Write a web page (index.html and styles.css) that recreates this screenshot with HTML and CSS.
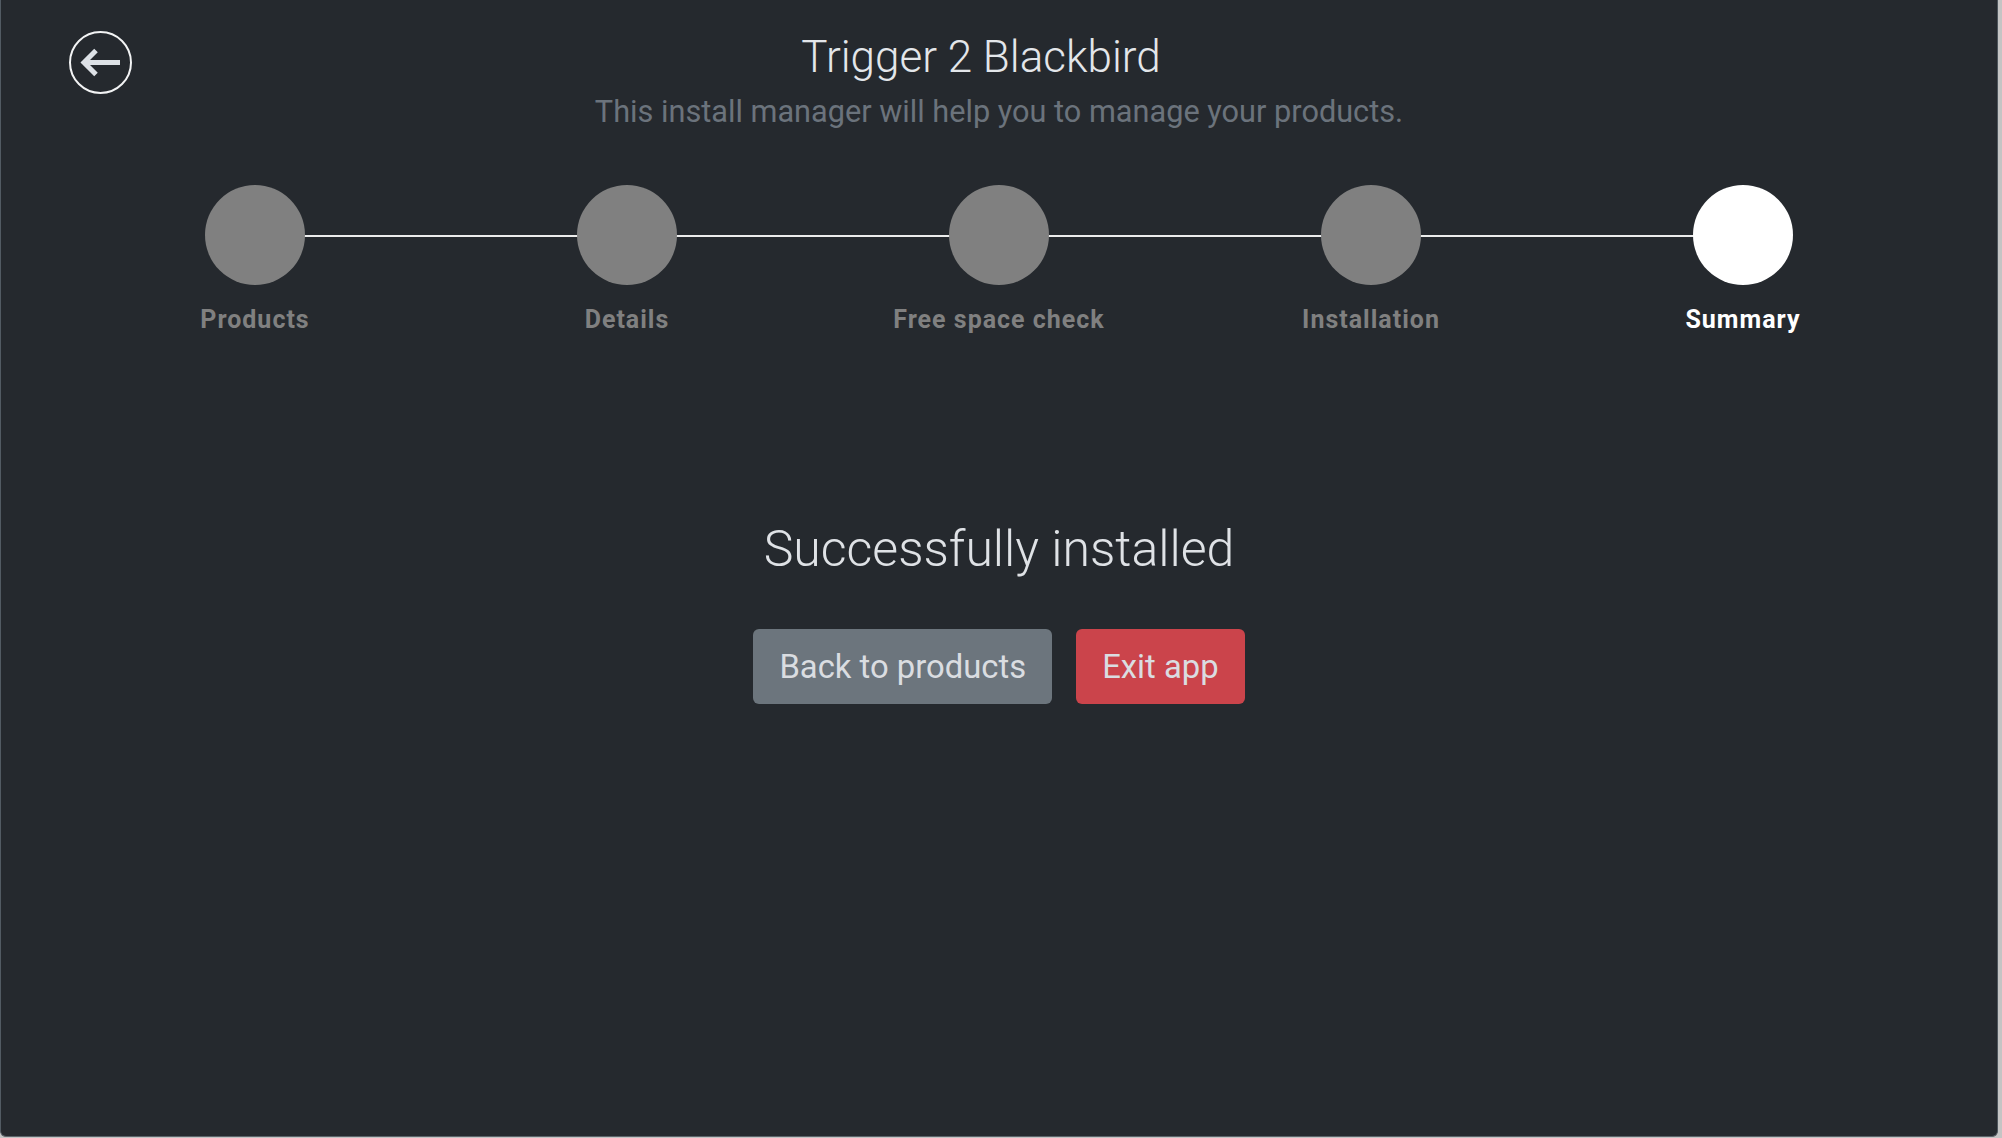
FILE: index.html
```html
<!DOCTYPE html>
<html lang="en">
<head>
<meta charset="utf-8">
<title>Trigger 2 Blackbird</title>
<link rel="stylesheet" href="styles.css">
</head>
<body>
<div class="window">
  <header class="header">
    <button class="back-btn" aria-label="Back">
      <svg viewBox="0 0 63 63" width="63" height="63">
        <circle cx="31.5" cy="31.5" r="30.5" fill="none" stroke="#f2f3f4" stroke-width="2"/>
        <path d="M27 19.5 L15 31.5 L27 43.5 M15 31.5 H51" fill="none" stroke="#dde1e6" stroke-width="5" stroke-linejoin="miter" stroke-linecap="butt"/>
      </svg>
    </button>
    <div class="heading">
      <h1 class="title">Trigger 2 Blackbird</h1>
      <p class="subtitle">This install manager will help you to manage your products.</p>
    </div>
    <div class="spacer"></div>
  </header>

  <ol class="stepper">
    <li class="step"><span class="dot"></span><span class="label">Products</span></li>
    <li class="step"><span class="dot"></span><span class="label">Details</span></li>
    <li class="step"><span class="dot"></span><span class="label">Free space check</span></li>
    <li class="step"><span class="dot"></span><span class="label">Installation</span></li>
    <li class="step active"><span class="dot"></span><span class="label">Summary</span></li>
  </ol>

  <main class="result">
    <h2 class="result-title">Successfully installed</h2>
    <div class="actions">
      <button class="btn btn-secondary">Back to products</button>
      <button class="btn btn-danger">Exit app</button>
    </div>
  </main>
</div>
</body>
</html>
```

FILE: styles.css
```css
* { box-sizing: border-box; }

html, body {
  margin: 0;
  padding: 0;
}

body {
  background: #c4c4c4;
  width: 2002px;
  height: 1138px;
  overflow: hidden;
  font-family: Roboto, "Liberation Sans", sans-serif;
}

.window {
  width: 1998px;
  height: 1137px;
  background: #25292e;
  border-left: 1px solid #525b63;
  border-right: 1px solid #4d555c;
  border-bottom: 1px solid #5d646a;
  border-radius: 0 0 6px 6px;
  display: flex;
  flex-direction: column;
}

.header {
  display: grid;
  grid-template-columns: 1fr auto 1fr;
  padding-top: 30px;
}

.back-btn {
  justify-self: start;
  margin: 1px 0 0 68px;
  padding: 0;
  width: 63px;
  height: 63px;
  border: 0;
  background: none;
  cursor: pointer;
}

.back-btn svg { display: block; }

.heading {
  text-align: center;
}

.title {
  margin: 0;
  padding-right: 36px;
  font-size: 44px;
  font-weight: 300;
  line-height: 54px;
  color: #e3e6ea;
}

.subtitle {
  margin: 10px 0 0;
  font-size: 30.7px;
  font-weight: 400;
  line-height: 36px;
  color: #6b737c;
}

.stepper {
  list-style: none;
  margin: 55px 0 0;
  padding: 0 68px;
  display: flex;
}

.step {
  flex: 1;
  position: relative;
  display: flex;
  flex-direction: column;
  align-items: center;
}

.step + .step::before {
  content: "";
  position: absolute;
  top: 50px;
  left: -50%;
  right: 50%;
  height: 2px;
  background: #ececec;
}

.dot {
  position: relative;
  z-index: 1;
  width: 100px;
  height: 100px;
  border-radius: 50%;
  background: #808080;
}

.label {
  margin-top: 20px;
  font-size: 25px;
  font-weight: 700;
  letter-spacing: 1px;
  line-height: 29px;
  color: #808080;
}

.step.active .dot { background: #ffffff; }
.step.active .label { color: #ffffff; }

.result {
  margin-top: 185px;
  display: flex;
  flex-direction: column;
  align-items: center;
}

.result-title {
  margin: 0;
  font-size: 50px;
  font-weight: 300;
  line-height: 60px;
  color: #dfe2e6;
}

.actions {
  margin-top: 50px;
  display: flex;
  gap: 24px;
}

.btn {
  height: 75px;
  padding: 0 26px;
  border: 0;
  border-radius: 6px;
  font-family: Roboto, "Liberation Sans", sans-serif;
  font-size: 32.8px;
  font-weight: 400;
  line-height: 48px;
  color: #dadde1;
  cursor: pointer;
}

.btn-secondary { background: #6c757d; }
.btn-danger { background: #cb444b; }
```
